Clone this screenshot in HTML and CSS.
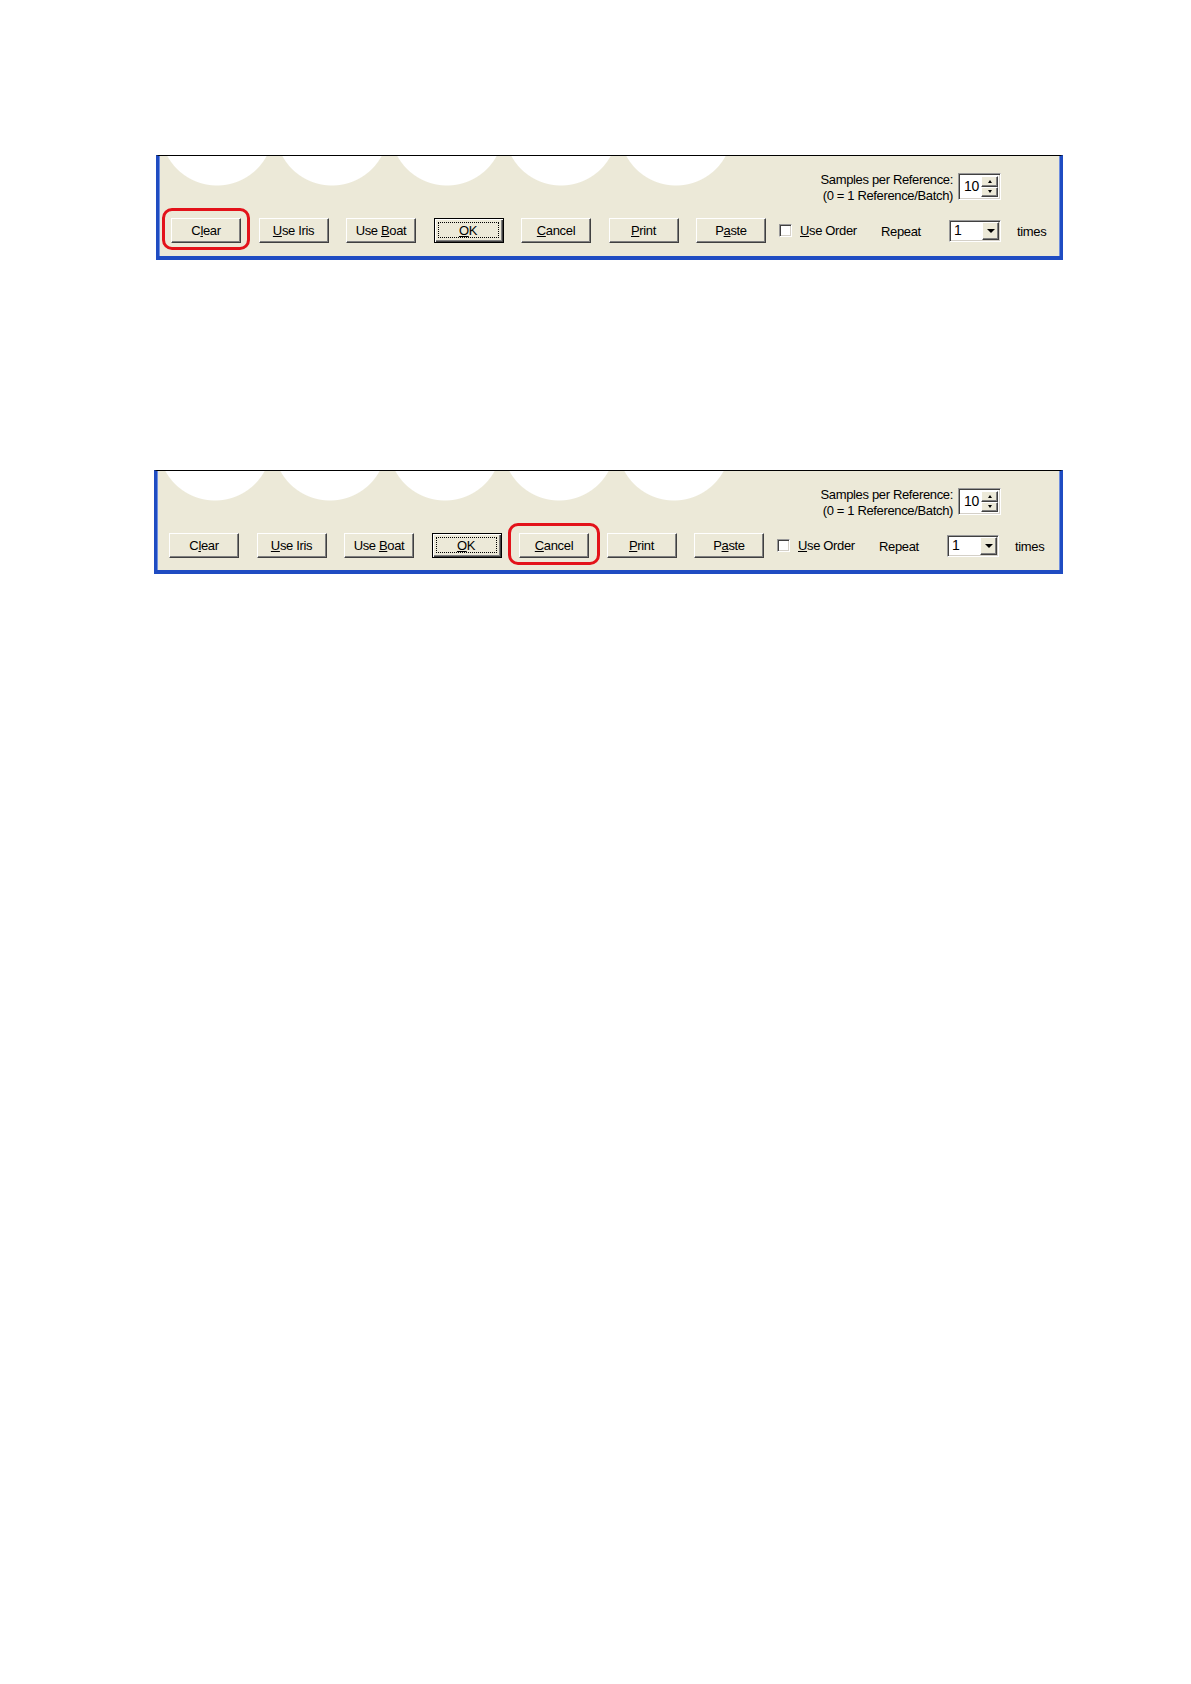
FILE: index.html
```html
<!DOCTYPE html>
<html>
<head>
<meta charset="utf-8">
<link rel="stylesheet" href="styles.css">
</head>
<body>
<div class="page">
  <div class="panel p1">
    <div class="top-row">
      <div class="spl-label">Samples per Reference:<br>(0 = 1 Reference/Batch)</div>
      <div class="spin"><span class="spin-val">10</span><div class="spin-btns"><span class="sb up"></span><span class="sb down"></span></div></div>
    </div>
    <div class="bottom-row">
      <div class="btn hl"><span>C<u>l</u>ear</span></div>
      <div class="btn"><span><u>U</u>se Iris</span></div>
      <div class="btn"><span>Use <u>B</u>oat</span></div>
      <div class="btn ok"><span class="focus"><span><u>O</u>K</span></span></div>
      <div class="btn"><span><u>C</u>ancel</span></div>
      <div class="btn"><span><u>P</u>rint</span></div>
      <div class="btn last"><span>P<u>a</u>ste</span></div>
      <span class="chk"></span><span class="chk-label"><u>U</u>se Order</span>
      <span class="repeat">Repeat</span>
      <div class="combo"><span class="combo-val">1</span><span class="combo-btn"></span></div>
      <span class="times">times</span>
    </div>
  </div>

  <div class="panel p2">
    <div class="top-row">
      <div class="spl-label">Samples per Reference:<br>(0 = 1 Reference/Batch)</div>
      <div class="spin"><span class="spin-val">10</span><div class="spin-btns"><span class="sb up"></span><span class="sb down"></span></div></div>
    </div>
    <div class="bottom-row">
      <div class="btn"><span>C<u>l</u>ear</span></div>
      <div class="btn"><span><u>U</u>se Iris</span></div>
      <div class="btn"><span>Use <u>B</u>oat</span></div>
      <div class="btn ok"><span class="focus"><span><u>O</u>K</span></span></div>
      <div class="btn hl hl-wide"><span><u>C</u>ancel</span></div>
      <div class="btn"><span><u>P</u>rint</span></div>
      <div class="btn last"><span>P<u>a</u>ste</span></div>
      <span class="chk"></span><span class="chk-label"><u>U</u>se Order</span>
      <span class="repeat">Repeat</span>
      <div class="combo"><span class="combo-val">1</span><span class="combo-btn"></span></div>
      <span class="times">times</span>
    </div>
  </div>
</div>
</body>
</html>
```
FILE: styles.css
```css
body {
  margin: 0;
  background: #ffffff;
  font-family: "Liberation Sans", Arial, sans-serif;
  font-size: 13px;
  letter-spacing: -0.35px;
  color: #000;
}

.page {
  padding-top: 155px;
}

.panel {
  box-sizing: border-box;
  width: 907px;
  height: 105px;
  margin-left: 156px;
  padding: 17px 59px 0 12px;
  background-color: #ECE9D8;
  border-top: 1px solid #000;
  border-left: 3px solid #1f4cc2;
  border-right: 3px solid #1f4cc2;
  border-bottom: 4px solid #1f4cc2;
  box-shadow: inset 1px 0 #6f8fe0, inset -1px 0 #6f8fe0;
  background-image:
    radial-gradient(circle 57px at 57px -27px, #ffffff 56px, rgba(255,255,255,0) 57px),
    radial-gradient(circle 57px at 57px -27px, #ffffff 56px, rgba(255,255,255,0) 57px),
    radial-gradient(circle 57px at 57px -27px, #ffffff 56px, rgba(255,255,255,0) 57px),
    radial-gradient(circle 57px at 57px -27px, #ffffff 56px, rgba(255,255,255,0) 57px),
    radial-gradient(circle 57px at 57px -27px, #ffffff 56px, rgba(255,255,255,0) 57px);
  background-size: 114px 40px;
  background-repeat: no-repeat;
  background-position: 1px 0, 116px 0, 231px 0, 345px 0, 460px 0;
}

.p2 {
  margin-top: 210px;
  margin-left: 154px;
  width: 909px;
  height: 104px;
  padding-top: 17px;
}

.top-row {
  display: flex;
  justify-content: flex-end;
  align-items: center;
  height: 27px;
}

.spl-label {
  text-align: right;
  line-height: 16px;
  margin-right: 5px;
  padding-top: 2px;
}

.spin {
  box-sizing: border-box;
  width: 43px;
  height: 27px;
  display: flex;
  background: #fff;
  border: 1px solid;
  border-color: #9a9a9a #fff #fff #9a9a9a;
  box-shadow: inset 1px 1px #404040, inset -1px -1px #d4d0c8;
}

.spin-val {
  flex: 1;
  padding-left: 5px;
  line-height: 25px;
  font-size: 14px;
}

.spin-btns {
  width: 17px;
  display: flex;
  flex-direction: column;
  padding: 2px 2px 2px 0;
}

.sb {
  flex: 1;
  box-sizing: border-box;
  background: #ECE9D8;
  border: 1px solid;
  border-color: #fff #404040 #404040 #fff;
  box-shadow: inset -1px -1px #808080;
  display: flex;
  align-items: center;
  justify-content: center;
}

.sb.up::after {
  content: "";
  border-left: 2.5px solid transparent;
  border-right: 2.5px solid transparent;
  border-bottom: 3px solid #000;
}

.sb.down::after {
  content: "";
  border-left: 2.5px solid transparent;
  border-right: 2.5px solid transparent;
  border-top: 3px solid #000;
}

.bottom-row {
  display: flex;
  align-items: center;
  height: 25px;
  margin-top: 18px;
}

.btn {
  position: relative;
  box-sizing: border-box;
  width: 70px;
  height: 25px;
  flex: none;
  display: flex;
  align-items: center;
  justify-content: center;
  background: #ECE9D8;
  border: 1px solid;
  border-color: #fff #404040 #404040 #fff;
  box-shadow: inset -1px -1px #808080;
  margin-right: 17.5px;
  padding-bottom: 1px;
}

.btn.last {
  margin-right: 13px;
}

.btn.ok {
  border: 1px solid #000;
  box-shadow: inset 1px 1px #fff, inset -1px -1px #404040, inset -2px -2px #808080;
  padding: 3px 4px 4px 3px;
}

.focus {
  flex: 1;
  align-self: stretch;
  display: flex;
  align-items: center;
  justify-content: center;
  border: 1px dotted #000;
}

.hl::after {
  content: "";
  position: absolute;
  top: -11px;
  left: -10px;
  right: -10px;
  bottom: -8px;
  border: 3px solid #e3121a;
  border-radius: 10px;
}

.hl-wide::after {
  left: -12px;
  right: -12px;
}

.chk {
  box-sizing: border-box;
  width: 13px;
  height: 13px;
  flex: none;
  background: #fff;
  border: 1px solid;
  border-color: #9a9a9a #fff #fff #9a9a9a;
  box-shadow: inset 1px 1px #404040, inset -1px -1px #d4d0c8;
  margin-right: 8px;
}

.chk-label {
  width: 81px;
  flex: none;
}

.repeat {
  width: 68px;
  flex: none;
  padding-top: 2px;
}

.combo {
  box-sizing: border-box;
  width: 52px;
  height: 22px;
  flex: none;
  display: flex;
  background: #fff;
  border: 1px solid;
  border-color: #9a9a9a #fff #fff #9a9a9a;
  box-shadow: inset 1px 1px #404040, inset -1px -1px #d4d0c8;
  margin-right: 16px;
}

.combo-val {
  flex: 1;
  padding-left: 4px;
  line-height: 19px;
  font-size: 14px;
}

.combo-btn {
  box-sizing: border-box;
  width: 17px;
  margin: 1px 1px 1px 0;
  background: #ECE9D8;
  border: 1px solid;
  border-color: #fff #404040 #404040 #fff;
  box-shadow: inset -1px -1px #808080;
  display: flex;
  align-items: center;
  justify-content: center;
}

.combo-btn::after {
  content: "";
  border-left: 4px solid transparent;
  border-right: 4px solid transparent;
  border-top: 4px solid #000;
}

.times {
  flex: none;
  padding-top: 2px;
}
```
